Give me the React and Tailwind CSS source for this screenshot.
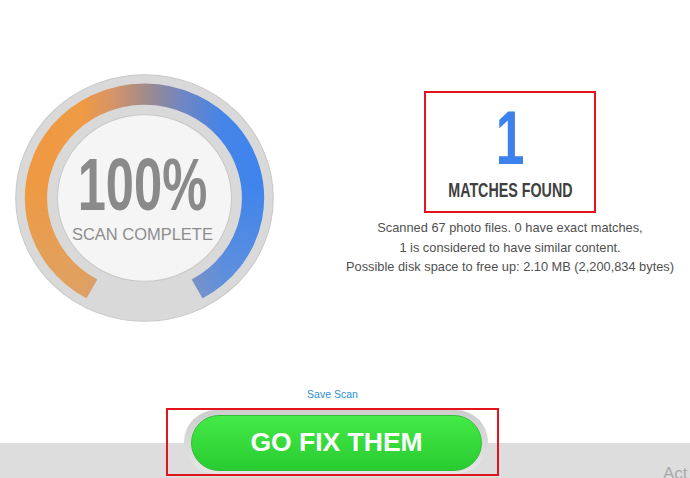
import React from 'react';

const sans = { fontFamily: '"Liberation Sans", Arial, sans-serif' };

function Gauge() {
  // arc from bottom-left (119deg) over the top to bottom-right (61deg)
  const cx = 125, cy = 125, r = 104.75;
  const pt = a => [cx + r * Math.cos(a * Math.PI / 180), cy + r * Math.sin(a * Math.PI / 180)];
  const [x1, y1] = pt(119);
  const [x2, y2] = pt(61);
  const d = `M ${x1} ${y1} A ${r} ${r} 0 1 1 ${x2} ${y2}`;
  return (
    <svg width="259" height="248" viewBox="0 0 250 250" preserveAspectRatio="none" className="block">
      <defs>
        <linearGradient id="arc" gradientUnits="userSpaceOnUse" x1="20" y1="0" x2="230" y2="0">
          <stop offset="0" stopColor="#ef9a42" />
          <stop offset="0.22" stopColor="#ef9a45" />
          <stop offset="0.36" stopColor="#d49468" />
          <stop offset="0.52" stopColor="#9c8a8e" />
          <stop offset="0.68" stopColor="#6e86c4" />
          <stop offset="0.86" stopColor="#4584e8" />
          <stop offset="1" stopColor="#3f84ec" />
        </linearGradient>
        <linearGradient id="fade" gradientUnits="userSpaceOnUse" x1="0" y1="110" x2="0" y2="230">
          <stop offset="0" stopColor="#b4b4b4" stopOpacity="0" />
          <stop offset="1" stopColor="#b4b4b4" stopOpacity="0.3" />
        </linearGradient>
      </defs>
      <circle cx={cx} cy={cy} r="124.3" fill="#d9d9d9" stroke="#c9c9c9" strokeWidth="1" />
      <path d={d} fill="none" stroke="url(#arc)" strokeWidth="21.5" />
      <path d={d} fill="none" stroke="url(#fade)" strokeWidth="21.5" />
      <circle cx={cx} cy={cy} r="84" fill="#f5f5f5" stroke="#c8c8c8" strokeWidth="1" />
      <text x="123" y="137" textAnchor="middle" fontSize="75" fontWeight="700" fill="#8a8a8a"
        textLength="125" lengthAdjust="spacingAndGlyphs" style={sans}>100%</text>
      <text x="123" y="167.3" textAnchor="middle" fontSize="16.9" fill="#8d8d8d"
        textLength="136" lengthAdjust="spacingAndGlyphs" style={sans}>SCAN COMPLETE</text>
    </svg>
  );
}

export default function App() {
  return (
    <div className="relative w-[690px] h-[478px] bg-white overflow-hidden flex flex-col" style={sans}>
      <div className="h-[384px] flex pt-[74px]">
        <div className="ml-[15px]"><Gauge /></div>
        <div className="ml-[56px] flex-1 flex flex-col items-center">
          <div className="mt-[17px] w-[172px] h-[122px] border-2 border-[#e3141d] flex flex-col items-center pt-[7px]">
            <div className="h-[76px] text-[76px] leading-[76px] font-bold text-[#3c82ec] scale-x-[0.68]">1</div>
            <div className="mt-[3px] text-[21px] leading-[21px] font-bold text-[#404040] whitespace-nowrap scale-x-[0.68]">MATCHES FOUND</div>
          </div>
          <div className="mt-[5px] text-[12.8px] leading-[19.5px] text-[#505050] text-center whitespace-nowrap">
            <div>Scanned 67 photo files. 0 have exact matches,</div>
            <div>1 is considered to have similar content.</div>
            <div>Possible disk space to free up: 2.10 MB (2,200,834 bytes)</div>
          </div>
        </div>
      </div>
      <div className="ml-[166px] w-[333px] h-[24px] text-center text-[10.5px] leading-[20px] text-[#2b8fd6]">Save Scan</div>
      <div className="h-[70px] bg-[linear-gradient(to_bottom,#ffffff_35px,#dddddd_35px)]">
        <div className="ml-[166px] w-[333px] h-[68px] border-2 border-[#e3141d] pl-[16px]">
          <div className="w-[304px] h-[64px] rounded-full bg-[linear-gradient(to_bottom,#cdcdcd,#e6e6e6)] pl-[7px] pr-[6px] pt-[5px] pb-[3px]">
            <div className="h-[56px] rounded-full bg-[linear-gradient(to_bottom,#44ea47,#29cc30)] border border-[#2fbf35] flex items-center justify-center text-white font-bold text-[26.5px]">
              GO FIX THEM
            </div>
          </div>
        </div>
      </div>
      <div className="absolute left-[663px] top-[461px] text-[17px] text-[#a9a9a9] whitespace-nowrap">Act</div>
    </div>
  );
}
